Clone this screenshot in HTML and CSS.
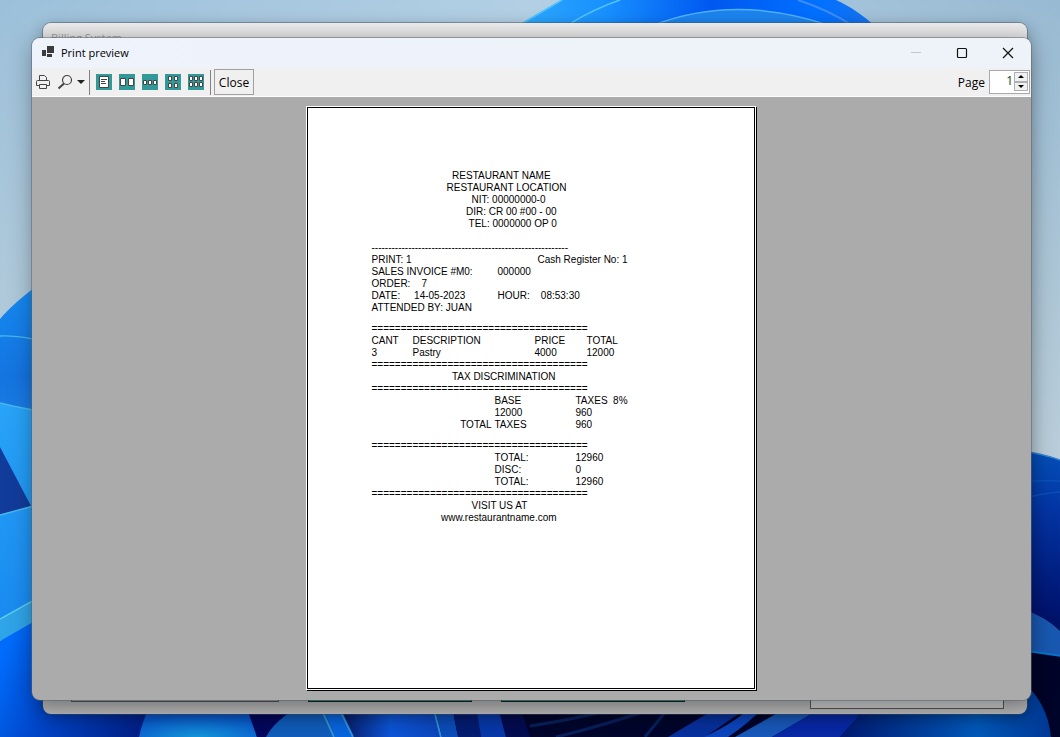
FILE: index.html
```html
<!DOCTYPE html>
<html lang="en">
<head>
<meta charset="utf-8">
<title>Print preview</title>
<link rel="stylesheet" href="styles.css">
</head>
<body class="desktop">
<svg class="wallpaper" viewBox="0 0 1060 737" preserveAspectRatio="none" aria-hidden="true">
  <defs>
    <linearGradient id="sky"><stop offset="0" stop-color="#9cc0da"/><stop offset=".5" stop-color="#b2cfe4"/><stop offset="1" stop-color="#98bad2"/></linearGradient>
    <linearGradient id="haze" x1="0" y1="0" x2="0" y2="1"><stop offset="0" stop-color="#bccfda" stop-opacity="0"/><stop offset=".6" stop-color="#bccfda" stop-opacity=".9"/></linearGradient>
    <linearGradient id="petal"><stop offset="0" stop-color="#38b4fc"/><stop offset=".3" stop-color="#1890ff"/><stop offset=".55" stop-color="#0058f0"/><stop offset=".8" stop-color="#0070ff"/><stop offset="1" stop-color="#2474e4"/></linearGradient>
    <linearGradient id="left1" x1="0" y1="0" x2="0" y2="1"><stop offset="0" stop-color="#158cf4"/><stop offset=".4" stop-color="#1474e0"/><stop offset="1" stop-color="#2c90ec"/></linearGradient>
    <linearGradient id="left2" x1="0" y1="0" x2="0" y2="1"><stop offset="0" stop-color="#28a4f8"/><stop offset="1" stop-color="#1888f0"/></linearGradient>
    <linearGradient id="royal" gradientUnits="userSpaceOnUse" x1="0" y1="660" x2="150" y2="730"><stop offset="0" stop-color="#006cfc"/><stop offset=".35" stop-color="#0048cc"/><stop offset="1" stop-color="#001c80"/></linearGradient>
    <linearGradient id="right1" x1="0" y1="0" x2="0" y2="1"><stop offset="0" stop-color="#0450b8"/><stop offset=".3" stop-color="#0434a4"/><stop offset=".8" stop-color="#001470"/><stop offset="1" stop-color="#001050"/></linearGradient>
    <radialGradient id="dome" cx=".5" cy="1" r=".7"><stop offset="0" stop-color="#1294d8"/><stop offset="1" stop-color="#0a58cc"/></radialGradient>
    <linearGradient id="mid"><stop offset="0" stop-color="#08185c"/><stop offset=".5" stop-color="#0c54d4"/><stop offset="1" stop-color="#0c44b8"/></linearGradient>
    <linearGradient id="corner"><stop offset="0" stop-color="#001a70"/><stop offset=".65" stop-color="#0058b8"/><stop offset="1" stop-color="#003894"/></linearGradient>
  </defs>
  <rect width="1060" height="737" fill="url(#sky)"/>
  <rect width="1060" height="737" fill="url(#haze)"/>
  <path d="M480 50Q523 21 562 0H836Q864 12 900 50Z" fill="url(#petal)"/>
  <path d="M523 23 562 0M571 23Q596 8 620 0" fill="none" stroke="#50c4fc" stroke-width="1.500"/>
  <path d="M798 0Q828 10 850 24" fill="none" stroke="#3c8cf8" stroke-width="2"/>
  <path d="M654 25Q735-6 828 25Z" fill="#1c84ee" stroke="#50b0ff" stroke-width="1.500"/>

  <path d="M0 319Q14 302 45 280V520H0Z" fill="url(#left1)"/>
  <path d="M0 403Q20 408 45 412V640H0Z" fill="url(#left2)"/>
  <path d="M0 447 31 506 0 515Z" fill="#123c9c"/>
  <path d="M0 336Q20 335 45 342M0 403Q20 408 45 412M0 515 45 503" fill="none" stroke="#48b8ec" stroke-width="1.500"/>
  <path d="M0 641 45 615V700H200V737H0Z" fill="url(#royal)"/>
  <path d="M0 619 45 594V615L0 641Z" fill="#30a4e8"/>
  <path d="M0 619 45 594" stroke="#5cccec" stroke-width="1.500"/>

  <path d="M1020 451Q1040 453 1060 460V650H1020Z" fill="url(#right1)"/>
  <path d="M1020 451Q1040 453 1060 460" fill="none" stroke="#3280d4" stroke-width="1.500"/>
  <path d="M1020 482Q1040 480 1060 481M1020 500Q1040 493 1060 492" fill="none" stroke="#0c50b8" stroke-width="1.500"/>
  <path d="M1020 608Q1045 616 1060 631V737H1020Z" fill="#1858b0"/>
  <path d="M1020 650 1062 656V740H1020Z" fill="#000428"/>
  <path d="M1020 650 1062 656" stroke="#0874d0" stroke-width="2"/>

  <rect x="150" y="706" width="880" height="31" fill="#02062c"/>
  <path d="M139 737Q142 722 150 706H250L257 737Z" fill="url(#dome)"/>
  <path d="M257 737 246 706H300L266 737Z" fill="#04085c"/>
  <path d="M266 737Q275 720 300 706H322L335 737Z" fill="#105cb8"/>
  <path d="M335 737 322 706H345L355 737Z" fill="#0864dc"/>
  <path d="M353 737 339 706H434L442 737Z" fill="url(#mid)"/>
  <path d="M320 706 334 737M338 706 353 737M433 706 441 737M448 706 457 737" stroke="#3090d4" stroke-width="2"/>
  <path d="M442 737 434 706H452L458 737Z" fill="#0c4cb8"/>
  <path d="M458 737 452 706H478L481 737Z" fill="#041c70"/>
  <path d="M481 737 476 706H498L506 737Z" fill="#0838a8"/>
  <path d="M506 737 498 706H520L530 737Z" fill="#040c50"/>
  <path d="M530 726Q570 720 610 710M556 737Q610 724 660 706M645 737 667 710" fill="none" stroke="#08205c" stroke-width="3"/>
  <path d="M668 737 720 706H750L705 737Z" fill="#08309c"/>
  <path d="M704 737Q736 722 752 706H765Q748 724 728 737Z" fill="#0c44bc"/>
  <path d="M735 737 790 706H825L772 737Z" fill="#1858b8"/>
  <path d="M772 737 825 706H868L840 737Z" fill="#0828a4"/>
  <path d="M840 737 868 706H1020V680Q1047 700 1051 737Z" fill="url(#corner)"/>
</svg>

<section class="window window-back" aria-label="Billing System">
  <div class="back-title">Billing System</div>
  <div class="back-footer">
    <span class="slot slot-list"></span>
    <span class="slot slot-green"></span>
    <span class="slot slot-green slot-wide"></span>
    <span class="slot slot-total"></span>
  </div>
</section>

<main class="window window-front">
  <header class="titlebar">
    <svg class="app-icon" width="13" height="13" viewBox="0 0 13 13" aria-hidden="true"><path d="M0 4h4v6H0zM5 0h7v7H5zM5 8h5v3H5z" fill="#3c3c3c"/></svg>
    <h1 class="title">Print preview</h1>
    <div class="caption-buttons">
      <button class="caption" aria-label="Minimize" disabled><svg width="12" height="12" viewBox="0 0 12 12"><path d="M1 5.500H11" stroke="#c2c6ca"/></svg></button>
      <button class="caption" aria-label="Maximize"><svg width="12" height="12" viewBox="0 0 12 12"><rect x="1.500" y="1.500" width="9" height="9" rx="1" fill="none" stroke="#111" stroke-width="1.200"/></svg></button>
      <button class="caption" aria-label="Close window"><svg width="12" height="12" viewBox="0 0 12 12"><path d="M1 1 11 11M11 1 1 11" stroke="#111" stroke-width="1.200"/></svg></button>
    </div>
  </header>

  <div class="toolbar">
    <button class="tool tool-print" aria-label="Print"><svg width="16" height="16" viewBox="0 0 16 16" fill="none" stroke="#444"><path d="M4.500 6V1.500H9.500L11.500 3.500V6M4 11.500H1.500V7.500Q1.500 6.500 2.500 6.500H13.500Q14.500 6.500 14.500 7.500V11.500H12M4.500 10.500H11.500V14.500H4.500Z"/></svg></button>
    <button class="tool tool-zoom" aria-label="Zoom"><svg width="28" height="16" viewBox="0 0 28 16"><circle cx="10" cy="6" r="4.500" fill="none" stroke="#444" stroke-width="1.200"/><path d="M7 9.500 1.500 14.500" stroke="#444" stroke-width="2"/><path d="M20 6H28L24 10Z" fill="#222"/></svg></button>
    <span class="divider"></span>
    <div class="page-modes">
      <button class="tool" aria-label="One page"><svg width="16" height="16" viewBox="0 0 16 16"><path d="M0 0H16V16H0Z" fill="#329998"/><path d="M3.500 2.500H12.500V13.500H3.500Z" fill="#fff" stroke="#444"/><path d="M5 5.500H11M5 7.500H9M5 9.500H10" stroke="#444"/></svg></button>
      <button class="tool" aria-label="Two pages"><svg width="16" height="16" viewBox="0 0 16 16"><path d="M0 0H16V16H0Z" fill="#329998"/><path d="M1.500 4.500H6.500V11.500H1.500ZM9.500 4.500H14.500V11.500H9.500Z" fill="#fff" stroke="#444"/></svg></button>
      <button class="tool" aria-label="Three pages"><svg width="16" height="16" viewBox="0 0 16 16"><path d="M0 0H16V16H0Z" fill="#329998"/><path d="M1.500 6.500H4.500V10.500H1.500ZM6.500 6.500H9.500V10.500H6.500ZM11.500 6.500H14.500V10.500H11.500Z" fill="#fff" stroke="#444"/></svg></button>
      <button class="tool" aria-label="Four pages"><svg width="16" height="16" viewBox="0 0 16 16"><path d="M0 0H16V16H0Z" fill="#329998"/><path d="M3.500 2.500H6.500V6.500H3.500ZM9.500 2.500H12.500V6.500H9.500ZM3.500 9.500H6.500V13.500H3.500ZM9.500 9.500H12.500V13.500H9.500Z" fill="#fff" stroke="#444"/></svg></button>
      <button class="tool" aria-label="Six pages"><svg width="16" height="16" viewBox="0 0 16 16"><path d="M0 0H16V16H0Z" fill="#329998"/><path d="M1.500 2.500H4.500V6.500H1.500ZM6.500 2.500H9.500V6.500H6.500ZM11.500 2.500H14.500V6.500H11.500ZM1.500 8.500H4.500V12.500H1.500ZM6.500 8.500H9.500V12.500H6.500ZM11.500 8.500H14.500V12.500H11.500Z" fill="#fff" stroke="#444"/></svg></button>
    </div>
    <span class="divider"></span>
    <button class="close-button">Close</button>
    <label class="page-label" for="page">Page</label>
    <div class="spinner">
      <input class="page-input" id="page" type="text" inputmode="numeric" value="1">
      <div class="steppers">
        <button class="step" aria-label="Next page"><svg width="6" height="3" viewBox="0 0 6 3"><path d="M0 3 3 0 6 3Z"/></svg></button>
        <button class="step" aria-label="Previous page"><svg width="6" height="3" viewBox="0 0 6 3"><path d="M0 0 3 3 6 0Z"/></svg></button>
      </div>
    </div>
  </div>

  <div class="preview">
    <article class="paper">
      <pre class="block">                             RESTAURANT NAME
                           RESTAURANT LOCATION
                                    NIT: 00000000-0
                                  DIR: CR 00 #00 - 00
                                   TEL: 0000000 OP 0</pre>
      <div class="block">
        <div class="rule">-----------------------------------------------------------</div>
        <div class="pair pair-register"><span>PRINT: 1</span><span>Cash Register No: 1</span></div>
        <div class="pair"><span>SALES INVOICE #M0:</span><span>000000</span></div>
        <div class="pair"><span>ORDER:    7</span></div>
        <div class="pair"><span>DATE:     14-05-2023</span><span>HOUR:    08:53:30</span></div>
        <div class="pair"><span>ATTENDED BY: JUAN</span></div>
      </div>
      <div class="block">
        <div class="rule">=====================================</div>
        <table class="items">
          <tr><th class="c-cant">CANT</th><th class="c-desc">DESCRIPTION</th><th class="c-price">PRICE</th><th>TOTAL</th></tr>
          <tr><td>3</td><td>Pastry</td><td>4000</td><td>12000</td></tr>
        </table>
        <div class="rule">=====================================</div>
        <pre>                             TAX DISCRIMINATION</pre>
        <div class="rule">=====================================</div>
        <table class="sums">
          <tr><td class="c-lead"></td><th class="c-name">BASE</th><th>TAXES  8%</th></tr>
          <tr><td></td><td>12000</td><td>960</td></tr>
          <tr><th class="c-lead">TOTAL</th><th>TAXES</th><td>960</td></tr>
        </table>
      </div>
      <div class="block">
        <div class="rule">=====================================</div>
        <table class="sums">
          <tr><td class="c-lead"></td><th class="c-name">TOTAL:</th><td>12960</td></tr>
          <tr><td></td><th>DISC:</th><td>0</td></tr>
          <tr><td></td><th>TOTAL:</th><td>12960</td></tr>
        </table>
        <div class="rule">=====================================</div>
        <pre>                                    VISIT US AT
                         www.restaurantname.com</pre>
      </div>
    </article>
  </div>
</main>
</body>
</html>
```

FILE: styles.css
```css
* { box-sizing: border-box; }

.desktop {
  margin: 0;
  height: 100vh;
  position: relative;
  overflow: hidden;
  font-family: "Open Sans", "Noto Sans", sans-serif;
  font-size: 12px;
  color: #000;
}

button, input { font: inherit; color: inherit; padding: 0; margin: 0; }

.wallpaper { position: absolute; inset: 0; width: 100%; height: 100%; }

.window {
  position: absolute;
  display: flex;
  flex-direction: column;
  border-radius: 8px;
  overflow: hidden;
}

.window-back {
  inset: 23px 33px 23px 43px;
  justify-content: space-between;
  background: linear-gradient(#ececec, #d8d8d8 16px, #9c9c9c 97%, #b4b4b4);
  box-shadow: 0 0 0 1px rgba(70, 80, 90, .45), 0 4px 16px rgba(0, 0, 0, .3);
}

.back-title { padding: 6px 8px; font-size: 11px; line-height: 18px; color: #949494; }

.back-footer { display: flex; align-items: flex-end; padding: 0 23px 5px 28px; }
.slot { height: 20px; border: 1px solid #505050; margin-bottom: 7px; }
.slot-list { width: 208px; margin-right: 29px; }
.slot-green { width: 164px; margin-right: 29px; background: #237365; border-color: #062c26; }
.slot-wide { width: 184px; }
.slot-total { width: 194px; margin: 0 0 0 auto; background: #bebebe; }

.window-front {
  inset: 38px 29px 37px 32px;
  background: #ababab;
  box-shadow: 0 0 0 1px rgba(90, 98, 106, .5), 0 6px 24px rgba(0, 0, 0, .3);
}

.titlebar {
  display: flex;
  align-items: center;
  height: 30px;
  padding-left: 10px;
  background: linear-gradient(90deg, #eef3fc, #edf3f8);
}
.app-icon { flex: none; margin-bottom: 2px; }
.title { margin: 0 0 0 6px; font-size: 11px; font-weight: 400; line-height: 16px; }
.caption-buttons { display: flex; margin-left: auto; }
.caption {
  display: grid;
  place-items: center;
  width: 46px;
  height: 28px;
  border: 0;
  background: none;
}

.toolbar {
  display: flex;
  align-items: center;
  height: 29px;
  padding: 0 1px 0 3px;
  background: #f0f0f0;
  border-bottom: 1px solid #fdfdfd;
}
.tool { display: block; height: 16px; border: 0; background: none; }
.tool svg { display: block; }
.tool-zoom { margin: 0 4px 0 6px; }
.divider { width: 1px; height: 25px; background: #808080; }
.page-modes { display: flex; gap: 7px; margin: 0 6px; }
.close-button {
  width: 40px;
  height: 26px;
  margin-left: 3px;
  border: 1px solid #a0a0a0;
  background: #f0f0f0;
}
.page-label { margin: 0 4px 0 auto; }
.spinner {
  display: flex;
  width: 41px;
  height: 24px;
  border: 1px solid #a9a9ad;
  background: #fff;
}
.page-input {
  flex: 1;
  min-width: 0;
  height: 18px;
  border: 0;
  background: none;
  text-align: right;
  color: #203c24;
}
.steppers { display: flex; flex-direction: column; width: 16px; padding: 1px 1px 2px; }
.step {
  flex: 1;
  display: grid;
  place-items: center;
  border: 1px solid #b0b0b0;
  background: #f0f0f0;
}

.preview {
  flex: 1;
  min-height: 0;
  display: flex;
  justify-content: center;
  padding: 10px 2px 11px 0;
}
.paper {
  height: 100%;
  aspect-ratio: 448 / 582;
  padding: 62px 64px 0;
  background: #fff;
  border: 1px solid #000;
  box-shadow: 0 0 0 1px #fff, 1px 1px 0 1px #000;
  font: 10px/12px "Liberation Sans", Arial, sans-serif;
  white-space: nowrap;
}
.paper pre { margin: 0; font: inherit; }
.block { display: flex; flex-direction: column; }
.paper .block + .block { margin-top: 9px; }
.paper .block:nth-child(2) { margin-top: 12px; }
.rule { height: 12px; }
.pair { display: grid; grid-template-columns: 126px 1fr; height: 12px; white-space: pre; }
.pair-register { grid-template-columns: 166px 1fr; }
.items, .sums { width: 264px; border-collapse: collapse; table-layout: fixed; }
.items th, .items td, .sums th, .sums td {
  height: 12px;
  padding: 0;
  font-weight: 400;
  text-align: left;
  white-space: pre;
}
.items .c-cant { width: 41px; }
.items .c-desc { width: 122px; }
.items .c-price { width: 52px; }
.sums .c-lead { width: 123px; padding-right: 3px; text-align: right; }
.sums .c-name { width: 81px; }
```
